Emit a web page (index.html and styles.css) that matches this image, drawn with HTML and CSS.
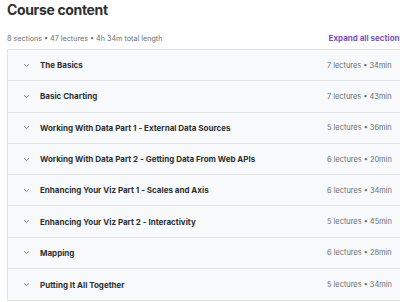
FILE: index.html
```html
<!DOCTYPE html>
<html lang="en">
<head>
    <meta charset="UTF-8">
    <title>Course content</title>
    <link rel="stylesheet" href="styles.css">
</head>
<body>
    <div class="curriculum">
        <h2>Course content</h2>
        <div class="summary">
            <span>8 sections • 47 lectures • 4h 34m total length</span>
            <a href="#" class="expand">Expand all sections</a>
        </div>
        <div class="sections">
            <div class="section">
                <span class="chev"><svg width="7" height="5" viewBox="0 0 7 5"><path d="M1 1.2 L3.5 3.6 L6 1.2" fill="none" stroke="#6a6f73" stroke-width="0.9"/></svg></span>
                <span class="name">The Basics</span>
                <span class="meta">7 lectures • 34min</span>
            </div>
            <div class="section">
                <span class="chev"><svg width="7" height="5" viewBox="0 0 7 5"><path d="M1 1.2 L3.5 3.6 L6 1.2" fill="none" stroke="#6a6f73" stroke-width="0.9"/></svg></span>
                <span class="name">Basic Charting</span>
                <span class="meta">7 lectures • 43min</span>
            </div>
            <div class="section">
                <span class="chev"><svg width="7" height="5" viewBox="0 0 7 5"><path d="M1 1.2 L3.5 3.6 L6 1.2" fill="none" stroke="#6a6f73" stroke-width="0.9"/></svg></span>
                <span class="name">Working With Data Part 1 - External Data Sources</span>
                <span class="meta">5 lectures • 36min</span>
            </div>
            <div class="section">
                <span class="chev"><svg width="7" height="5" viewBox="0 0 7 5"><path d="M1 1.2 L3.5 3.6 L6 1.2" fill="none" stroke="#6a6f73" stroke-width="0.9"/></svg></span>
                <span class="name">Working With Data Part 2 - Getting Data From Web APIs</span>
                <span class="meta">6 lectures • 20min</span>
            </div>
            <div class="section">
                <span class="chev"><svg width="7" height="5" viewBox="0 0 7 5"><path d="M1 1.2 L3.5 3.6 L6 1.2" fill="none" stroke="#6a6f73" stroke-width="0.9"/></svg></span>
                <span class="name">Enhancing Your Viz Part 1 - Scales and Axis</span>
                <span class="meta">6 lectures • 34min</span>
            </div>
            <div class="section">
                <span class="chev"><svg width="7" height="5" viewBox="0 0 7 5"><path d="M1 1.2 L3.5 3.6 L6 1.2" fill="none" stroke="#6a6f73" stroke-width="0.9"/></svg></span>
                <span class="name">Enhancing Your Viz Part 2 - Interactivity</span>
                <span class="meta">5 lectures • 45min</span>
            </div>
            <div class="section">
                <span class="chev"><svg width="7" height="5" viewBox="0 0 7 5"><path d="M1 1.2 L3.5 3.6 L6 1.2" fill="none" stroke="#6a6f73" stroke-width="0.9"/></svg></span>
                <span class="name">Mapping</span>
                <span class="meta">6 lectures • 28min</span>
            </div>
            <div class="section">
                <span class="chev"><svg width="7" height="5" viewBox="0 0 7 5"><path d="M1 1.2 L3.5 3.6 L6 1.2" fill="none" stroke="#6a6f73" stroke-width="0.9"/></svg></span>
                <span class="name">Putting It All Together</span>
                <span class="meta">5 lectures • 34min</span>
            </div>
        </div>
    </div>
</body>
</html>
```

FILE: styles.css
```css
* {
    box-sizing: border-box;
    margin: 0;
    padding: 0;
}

body {
    font-family: Inter, "Noto Sans", sans-serif;
    background: #fff;
    color: #1c1d1f;
    width: 400px;
    height: 302px;
    overflow: hidden;
}

.curriculum {
    padding: 0 0 0 7px;
    width: 420px;
}

h2 {
    font-size: 14px;
    font-weight: 700;
    letter-spacing: -0.35px;
    line-height: 20px;
    color: #2d2f31;
}

.summary {
    display: flex;
    justify-content: space-between;
    align-items: center;
    margin-top: 11px;
    height: 14px;
    padding-right: 16px;
    font-size: 7.2px;
    color: #6a6f73;
}

.expand {
    font-size: 8px;
    font-weight: 700;
    color: #7c4fc4;
    text-decoration: none;
}

.sections {
    margin-top: 4px;
    border: 1px solid #e0e2e5;
    border-right: none;
    background: #f7f9fa;
}

.section {
    display: flex;
    align-items: center;
    height: 31.3px;
    padding-left: 15px;
    border-bottom: 1px solid #e0e2e5;
}

.section:last-child {
    border-bottom: none;
}

.chev {
    display: flex;
    width: 17px;
}

.name {
    flex: 1;
    font-size: 8px;
    font-weight: 700;
    color: #2d2f31;
}

.meta {
    width: 93px;
    font-size: 7.4px;
    color: #6a6f73;
}
```
